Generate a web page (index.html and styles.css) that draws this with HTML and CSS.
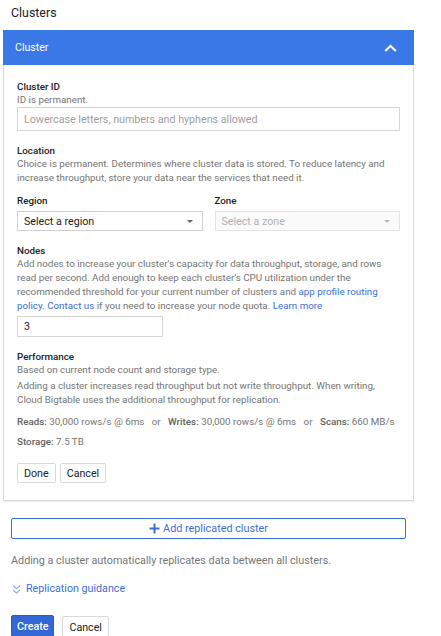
FILE: index.html
```html
<!DOCTYPE html>
<html>
<head>
<meta charset="utf-8">
<link rel="stylesheet" href="styles.css">
</head>
<body>
<div class="page">
  <h1 class="title">Clusters</h1>
  <div class="card">
    <div class="card-header">
      <span>Cluster</span>
      <svg class="chev" width="13" height="8" viewBox="0 0 13 8"><path d="M1.2 7 L6.5 1.9 L11.8 7" fill="none" stroke="#fff" stroke-width="2.1"/></svg>
    </div>
    <div class="card-body">
      <div class="field">
        <div class="label">Cluster ID</div>
        <div class="hint">ID is permanent.</div>
        <div class="input wide placeholder"><span>Lowercase letters, numbers and hyphens allowed</span></div>
      </div>
      <div class="field f-loc">
        <div class="label">Location</div>
        <div class="hint">Choice is permanent. Determines where cluster data is stored. To reduce latency and increase throughput, store your data near the services that need it.</div>
        <div class="row">
          <div class="col">
            <div class="label sub">Region</div>
            <div class="select"><span>Select a region</span><span class="caret"></span></div>
          </div>
          <div class="col">
            <div class="label sub">Zone</div>
            <div class="select disabled"><span>Select a zone</span><span class="caret"></span></div>
          </div>
        </div>
      </div>
      <div class="field f-nodes">
        <div class="label">Nodes</div>
        <div class="hint">Add nodes to increase your cluster's capacity for data throughput, storage, and rows read per second. Add enough to keep each cluster's CPU utilization under the recommended threshold for your current number of clusters and <a>app profile routing policy</a>. <a>Contact us</a> if you need to increase your node quota. <a>Learn more</a></div>
        <div class="input small"><span>3</span></div>
      </div>
      <div class="field f-perf">
        <div class="label">Performance</div>
        <div class="hint">Based on current node count and storage type.</div>
        <div class="hint p2">Adding a cluster increases read throughput but not write throughput. When writing, Cloud Bigtable uses the additional throughput for replication.</div>
        <div class="stats"><b>Reads:</b> 30,000 rows/s @ 6ms <span class="or">or</span> <b>Writes:</b> 30,000 rows/s @ 6ms <span class="or">or</span> <b>Scans:</b> 660 MB/s</div>
        <div class="stats st2"><b>Storage:</b> 7.5 TB</div>
      </div>
      <div class="buttons">
        <button class="btn">Done</button>
        <button class="btn">Cancel</button>
      </div>
    </div>
  </div>
  <button class="add-btn"><svg width="11" height="11" viewBox="0 0 11 11"><path d="M5.5 0.5 V10.5 M0.5 5.5 H10.5" stroke="#3a6fd8" stroke-width="2"/></svg><span>Add replicated cluster</span></button>
  <p class="note">Adding a cluster automatically replicates data between all clusters.</p>
  <div class="guide"><svg width="9" height="11" viewBox="0 0 9 11"><path d="M1 1.5 L4.5 4.6 L8 1.5 M1 6 L4.5 9.1 L8 6" fill="none" stroke="#8aa8e6" stroke-width="1.1"/></svg><a>Replication guidance</a></div>
  <div class="actions">
    <button class="btn primary">Create</button>
    <button class="btn">Cancel</button>
  </div>
</div>
</body>
</html>
```
FILE: styles.css
```css
* { box-sizing: border-box; }
html, body { margin: 0; padding: 0; background: #fff; }
body { font-family: Roboto, "Noto Sans", Arial, sans-serif; color: #212121; }
.page { width: 441px; }
.title { font-size: 12.4px; font-weight: 400; margin: 0; padding: 4px 0 0 11px; height: 30px; line-height: 17px; color: #212121; }
.card { margin-left: 3px; width: 411px; border: 1px solid #d9d9d9; border-top: none; box-shadow: 0 1px 1px rgba(0,0,0,0.06); }
.card-header { height: 35px; margin: 0 -1px 0 -1px; background: #3b78e7; color: #fff; font-size: 10.6px; display: flex; align-items: center; justify-content: space-between; padding: 0 17px 0 12px; }
.card-header .chev { margin-top: 1px; }
.card-body { padding: 15px 13px 17px 13px; }
.label { font-size: 9.8px; font-weight: 500; line-height: 13px; color: #212121; }
.hint { font-size: 9.8px; line-height: 14px; color: #757575; }
.hint a, .guide a { color: #3b6fd8; text-decoration: none; }
.input { border: 1px solid #d6d6d6; font-size: 10.7px; line-height: 13px; padding: 0 6px; color: #212121; display: flex; align-items: center; }
.input.wide { width: 383px; height: 24px; }
.input.placeholder { color: #9e9e9e; }
.input.small { margin-top: 3px; width: 146px; height: 21px; }
.f-loc { margin-top: 13px; }
.row { display: flex; gap: 12px; margin-top: 9px; }
.col { flex: 1; }
.label.sub { margin-bottom: 4px; }
.select { border: 1px solid #d0d0d0; height: 20px; display: flex; align-items: center; justify-content: space-between; padding: 0 9px 0 6px; font-size: 10.7px; line-height: 13px; color: #212121; }
.caret { width: 0; height: 0; border-left: 3.5px solid transparent; border-right: 3.5px solid transparent; border-top: 3.5px solid #666; }
.select.disabled { background: #fafafa; border-color: #e3e3e3; color: #b0b0b0; }
.select.disabled .caret { border-top-color: #b8b8b8; }
.f-nodes { margin-top: 13px; }
.f-perf { margin-top: 13px; }
.hint.p2 { margin-top: 2px; }
.stats { font-size: 9.8px; line-height: 14px; color: #757575; margin-top: 8px; white-space: nowrap; }
.stats b { font-weight: 500; color: #5f5f5f; }
.stats .or { margin: 0 5px; }
.stats.st2 { margin-top: 6px; }
.buttons { display: flex; gap: 4px; margin-top: 14px; }
.btn { font-family: inherit; font-size: 10.7px; height: 20px; padding: 0 6px; background: #fff; border: 1px solid #d9d9d9; color: #212121; border-radius: 2px; }
.add-btn { display: flex; align-items: center; justify-content: center; gap: 3px; margin: 17px 0 0 11px; width: 395px; height: 21px; border: 1px solid #3b6fd8; border-radius: 2px; background: #fff; color: #3b6fd8; font-family: inherit; font-size: 10.8px; padding: 0; }
.note { font-size: 10.8px; line-height: 14px; color: #757575; margin: 15px 0 0 11px; }
.guide { display: flex; align-items: center; gap: 5px; margin: 14px 0 0 12px; font-size: 10.7px; line-height: 14px; }
.actions { display: flex; gap: 8px; margin: 19px 0 0 11px; align-items: flex-start; }
.actions .btn { height: 22px; padding: 0 6px; }
.btn.primary { background: #3367d6; border-color: #2d5cc4; color: #fff; font-weight: 500; padding: 0 5px; }
.actions .btn + .btn { margin-top: 1px; }
```
